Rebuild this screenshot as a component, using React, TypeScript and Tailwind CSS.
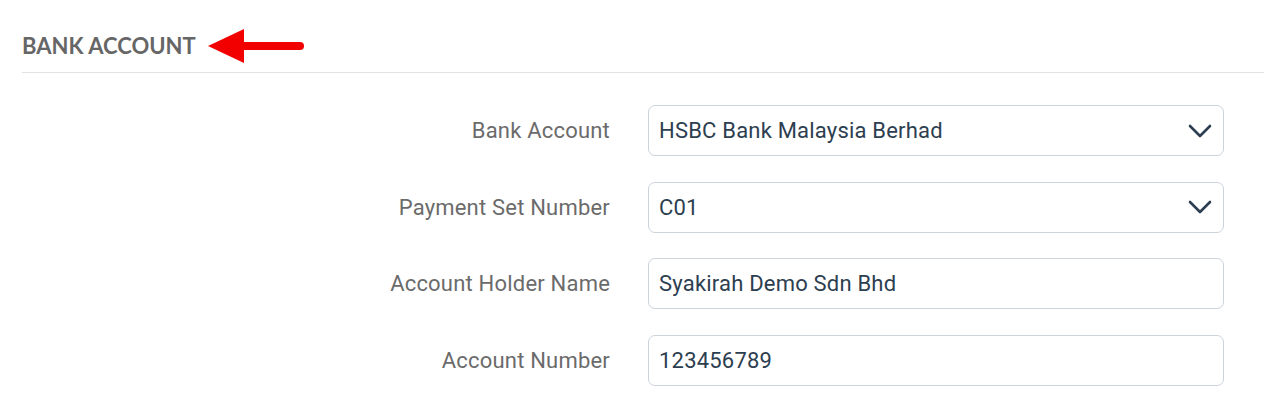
import React from 'react';

interface Field {
  label: string;
  value: string;
  select?: boolean;
}

const fields: Field[] = [
  { label: 'Bank Account', value: 'HSBC Bank Malaysia Berhad', select: true },
  { label: 'Payment Set Number', value: 'C01', select: true },
  { label: 'Account Holder Name', value: 'Syakirah Demo Sdn Bhd' },
  { label: 'Account Number', value: '123456789' },
];

const Chevron = () => (
  <svg width="24" height="14" viewBox="0 0 24 14" fill="none">
    <path d="M2 2l10 10L22 2" stroke="#2d3e50" strokeWidth="2.6" strokeLinecap="round" strokeLinejoin="round" />
  </svg>
);

const Arrow = () => (
  <svg width="100" height="36" viewBox="0 0 100 36" fill="none">
    <path d="M0 18L36 1v34z" fill="#f20000" />
    <path d="M34 18h58" stroke="#f20000" strokeWidth="8" strokeLinecap="round" />
  </svg>
);

export default function App() {
  return (
    <div className="w-[1264px] h-[417px] bg-white overflow-hidden">
      <div className="pl-[22px] pt-[27px]">
        <div className="flex items-center h-[36px]">
          <h2 className="text-[22px] font-bold text-[#666666] font-['Lato',sans-serif]">
            BANK ACCOUNT
          </h2>
          <div className="ml-[12px] mt-[2px]">
            <Arrow />
          </div>
        </div>
        <div className="mt-[9px] border-t border-[#e3e3e3]" />
      </div>

      <div className="mt-[32px] flex flex-col gap-[25.67px] font-['Roboto',sans-serif]">
        {fields.map((f) => (
          <div key={f.label} className="flex items-center">
            <label className="w-[610px] text-right text-[22px] text-[#6b6b6b] tracking-[0.2px]">{f.label}</label>
            <div className="ml-[38px] w-[576px] h-[51px] border border-[#ccd3dc] rounded-[7px] flex items-center justify-between pl-[10px] pr-[11px]">
              <span className="text-[22px] text-[#2d3e50] tracking-[0.2px]">{f.value}</span>
              {f.select && <Chevron />}
            </div>
          </div>
        ))}
      </div>
    </div>
  );
}
